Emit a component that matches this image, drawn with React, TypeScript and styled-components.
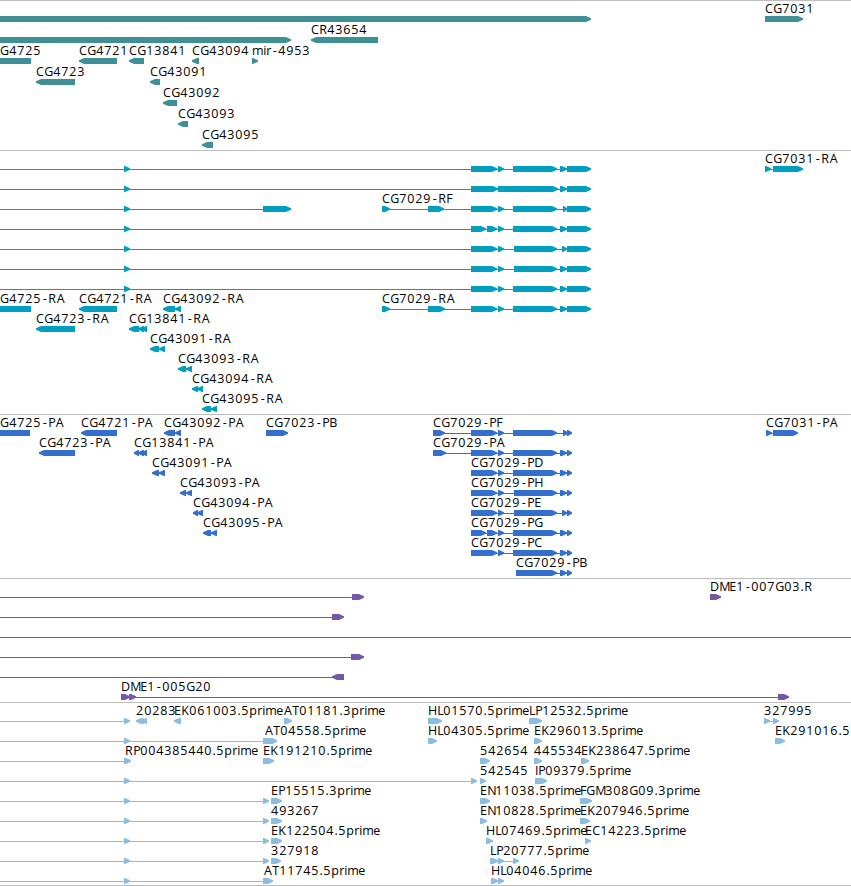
import React from 'react';
import styled, { createGlobalStyle } from 'styled-components';

type Span = [number, number];

interface Feature {
  name?: string;
  labelAt?: number;
  reverse?: boolean;
  spans: Span[];
}

interface TrackData {
  id: string;
  color: string;
  laneHeight: number;
  gap: number;
  lanes: Feature[][];
}

const VIEW_WIDTH = 851;
// features that begin before the visible region start here
const OFF: Span = [-12, -10];

const GlobalStyle = createGlobalStyle`
  body {
    margin: 0;
    background: #fff;
  }
`;

const Browser = styled.main`
  display: flex;
  flex-direction: column;
  width: ${VIEW_WIDTH}px;
  height: 886px;
  overflow: hidden;
  box-sizing: border-box;
  border-bottom: 1px solid #bebebe;
`;

const TrackPanel = styled.section<{ $color: string; $gap: number }>`
  display: flex;
  flex-direction: column;
  border-top: 1px solid #bebebe;
  padding-bottom: ${(props) => props.$gap}px;
  color: ${(props) => props.$color};
`;

// bars reach one pixel below their lane, so the overflow stays visible
const LaneCanvas = styled.svg<{ $height: number }>`
  display: block;
  flex: none;
  width: 100%;
  height: ${(props) => props.$height}px;
  overflow: visible;
`;

const Label = styled.text`
  font-family: 'Open Sans', 'Noto Sans', sans-serif;
  font-size: 12.5px;
  fill: #000;
`;

const Glyph = styled.path`
  fill: currentColor;
`;

// Character advances in whole pixels, digits take 8
const ADVANCE: Record<string, number> = {
  G: 9, D: 9, H: 9, M: 10, E: 7, F: 6, L: 6, P: 7, T: 7, B: 7, I: 3,
  '-': 7, '.': 4, r: 5, i: 3, m: 11, e: 7,
};

// Narrow glyphs sit inside their cell instead of at its left edge
const BEARING: Record<string, number> = { '-': 1.7, A: 0.7, '.': 0.5 };

const charPositions = (text: string, start: number) => {
  let x = start;
  return text.split('').map((c, i) => {
    const at = x + (i > 0 ? BEARING[c] ?? 0.3 : 0);
    x += ADVANCE[c] ?? 8;
    return at.toFixed(1);
  }).join(' ');
};

const arrowPath = ([start, end]: Span, reverse?: boolean) => {
  const head = Math.min(5, end - start - 1);
  if (reverse) {
    const neck = start + head;
    return `M${end} 15H${neck}L${start} 17.3V18.7L${neck} 21H${end}Z`;
  }
  const neck = end - head;
  return `M${start} 15H${neck}L${end} 17.3V18.7L${neck} 21H${start}Z`;
};

const fwd = (name: string, ...spans: Span[]): Feature => ({ name, spans });
const rev = (name: string, ...spans: Span[]): Feature => ({ name, reverse: true, spans });
const anon = (...spans: Span[]): Feature => ({ spans: [OFF, ...spans] });

const tailR: Span[] = [[560, 567], [567, 591]];
const tailP: Span[] = [[560, 567], [567, 572]];
const mid: Span[] = [[471, 497], [498, 504]];
const split: Span[] = [[471, 486], [487, 497], [498, 504]];
const exon: Span = [513, 557];
const shortExon: Span = [514, 557];
const first: Span = [124, 130];

const tracks: TrackData[] = [
  {
    id: 'genes',
    color: '#3f8f96',
    laneHeight: 21,
    gap: 2,
    lanes: [
      [anon([-9, 591]), fwd('CG7031', [765, 803])],
      [anon([-9, 291]), rev('CR43654', [311, 378])],
      [
        { name: 'G4725', labelAt: 0, reverse: true, spans: [[-10, 31]] },
        rev('CG4721', [79, 117]),
        rev('CG13841', [129, 144]),
        rev('CG43094', [192, 199]),
        fwd('mir-4953', [252, 258]),
      ],
      [rev('CG4723', [36, 75]), rev('CG43091', [150, 160])],
      [rev('CG43092', [163, 177])],
      [rev('CG43093', [178, 188])],
      [rev('CG43095', [202, 213])],
    ],
  },
  {
    id: 'transcripts',
    color: '#009fc1',
    laneHeight: 20,
    gap: 3,
    lanes: [
      [anon(first, ...mid, exon, ...tailR), fwd('CG7031-RA', [765, 771], [773, 803])],
      [anon(first, [471, 498], [498, 558], ...tailR)],
      [
        anon(first, [263, 291]),
        fwd('CG7029-RF', [382, 390], [428, 444], ...mid, exon, [563, 567], [567, 591]),
      ],
      [anon(first, ...split, exon, ...tailR)],
      [anon(first, ...mid, shortExon, [562, 567], [567, 591])],
      [anon(first, ...mid, shortExon, ...tailR)],
      [anon(first, ...mid, exon, ...tailR)],
      [
        { name: 'G4725-RA', labelAt: 0, reverse: true, spans: [[-10, 31]] },
        rev('CG4721-RA', [79, 117]),
        rev('CG43092-RA', [163, 175], [175, 181]),
        fwd('CG7029-RA', [382, 390], [428, 445], ...mid, exon, ...tailR),
      ],
      [rev('CG4723-RA', [36, 75]), rev('CG13841-RA', [129, 139], [138, 144], [142, 147])],
      [rev('CG43091-RA', [150, 159], [159, 165])],
      [rev('CG43093-RA', [178, 186], [186, 192])],
      [rev('CG43094-RA', [192, 198], [197, 203])],
      [rev('CG43095-RA', [202, 211], [211, 217])],
    ],
  },
  {
    id: 'proteins',
    color: '#336fcc',
    laneHeight: 20,
    gap: 3,
    lanes: [
      [
        { name: 'G4725-PA', labelAt: 0, reverse: true, spans: [[-10, 30]] },
        rev('CG4721-PA', [81, 117]),
        rev('CG43092-PA', [164, 175], [175, 181]),
        fwd('CG7023-PB', [266, 288]),
        fwd('CG7029-PF', [433, 445], ...mid, exon, [563, 568], [567, 572]),
        fwd('CG7031-PA', [766, 772], [773, 798]),
      ],
      [
        rev('CG4723-PA', [39, 75]),
        rev('CG13841-PA', [134, 139], [138, 144], [142, 147]),
        fwd('CG7029-PA', [433, 446], ...mid, exon, ...tailP),
      ],
      [rev('CG43091-PA', [152, 159], [159, 165]), fwd('CG7029-PD', ...mid, exon, ...tailP)],
      [rev('CG43093-PA', [180, 186], [186, 192]), fwd('CG7029-PH', ...mid, shortExon, ...tailP)],
      [
        rev('CG43094-PA', [193, 198], [197, 203]),
        fwd('CG7029-PE', ...mid, shortExon, [562, 567], [567, 572]),
      ],
      [rev('CG43095-PA', [203, 211], [211, 217]), fwd('CG7029-PG', ...split, exon, ...tailP)],
      [fwd('CG7029-PC', ...mid, exon, ...tailP)],
      [fwd('CG7029-PB', [516, 557], ...tailP)],
    ],
  },
  {
    id: 'clones',
    color: '#7457a7',
    laneHeight: 20,
    gap: 3,
    lanes: [
      [anon([352, 364]), fwd('DME1-007G03.R', [710, 721])],
      [anon([332, 344])],
      [anon([870, 880])],
      [anon([351, 364])],
      [{ reverse: true, spans: [OFF, [332, 344]] }],
      [fwd('DME1-005G20', [121, 130], [129, 136], [778, 789])],
    ],
  },
  {
    id: 'ests',
    color: '#8abde0',
    laneHeight: 20,
    gap: 2,
    lanes: [
      [
        anon(first),
        rev('20283', [136, 142], [139, 144], [142, 147]),
        rev('EK061003.5prime', [174, 181]),
        fwd('AT01181.3prime', [284, 292]),
        fwd('HL01570.5prime', [428, 442]),
        fwd('LP12532.5prime', [529, 542]),
        fwd('327995', [764, 770], [773, 779]),
      ],
      [
        anon(first, [263, 277]),
        { name: 'AT04558.5prime', labelAt: 265, spans: [[264, 277]] },
        fwd('HL04305.5prime', [428, 437]),
        fwd('EK296013.5prime', [534, 542]),
        fwd('EK291016.5', [775, 785]),
      ],
      [
        { name: 'RP004385440.5prime', labelAt: 125, spans: [OFF, [124, 131]] },
        fwd('EK191210.5prime', [263, 274]),
        fwd('542654', [480, 490]),
        fwd('445534', [534, 542]),
        fwd('EK238647.5prime', [581, 589]),
      ],
      [anon(first, [471, 477]), fwd('542545', [480, 486]), fwd('IP09379.5prime', [535, 547])],
      [
        anon(first, [263, 269]),
        fwd('EP15515.3prime', [271, 282]),
        fwd('EN11038.5prime', [480, 490]),
        fwd('FGM308G09.3prime', [580, 592]),
      ],
      [
        anon(first, [263, 269]),
        fwd('493267', [271, 282]),
        fwd('EN10828.5prime', [480, 487]),
        fwd('EK207946.5prime', [580, 590]),
      ],
      [
        anon(first, [263, 269]),
        fwd('EK122504.5prime', [271, 282]),
        fwd('HL07469.5prime', [486, 493]),
        fwd('EC14223.5prime', [585, 591]),
      ],
      [
        anon(first, [263, 269]),
        fwd('327918', [271, 281]),
        fwd('LP20777.5prime', [490, 498], [498, 504], [513, 519]),
      ],
      [
        { name: 'AT11745.5prime', labelAt: 264, spans: [OFF, first, [263, 273]] },
        fwd('HL04046.5prime', [491, 498], [498, 504]),
      ],
    ],
  },
];

const FeatureGlyph = ({ name, labelAt, reverse, spans }: Feature) => {
  const start = spans[0][0];
  const end = spans[spans.length - 1][1];

  return (
    <g>
      {spans.length > 1 && <Glyph d={`M${start} 18H${end - 2}V19H${start}Z`} />}
      {spans.map((span) => (
        <Glyph key={span[0]} d={arrowPath(span, reverse)} />
      ))}
      {name && <Label x={charPositions(name, labelAt ?? start)} y={12}>{name}</Label>}
    </g>
  );
};

const Track = ({ color, laneHeight, gap, lanes }: TrackData) => (
  <TrackPanel $color={color} $gap={gap}>
    {lanes.map((lane, i) => (
      <LaneCanvas key={i} $height={laneHeight}>
        {lane.map((feature) => (
          <FeatureGlyph key={feature.name ?? feature.spans[0][0]} {...feature} />
        ))}
      </LaneCanvas>
    ))}
  </TrackPanel>
);

const App = () => {
  return (
    <Browser>
      <GlobalStyle />
      {tracks.map((track) => (
        <Track key={track.id} {...track} />
      ))}
    </Browser>
  );
};

export default App;
